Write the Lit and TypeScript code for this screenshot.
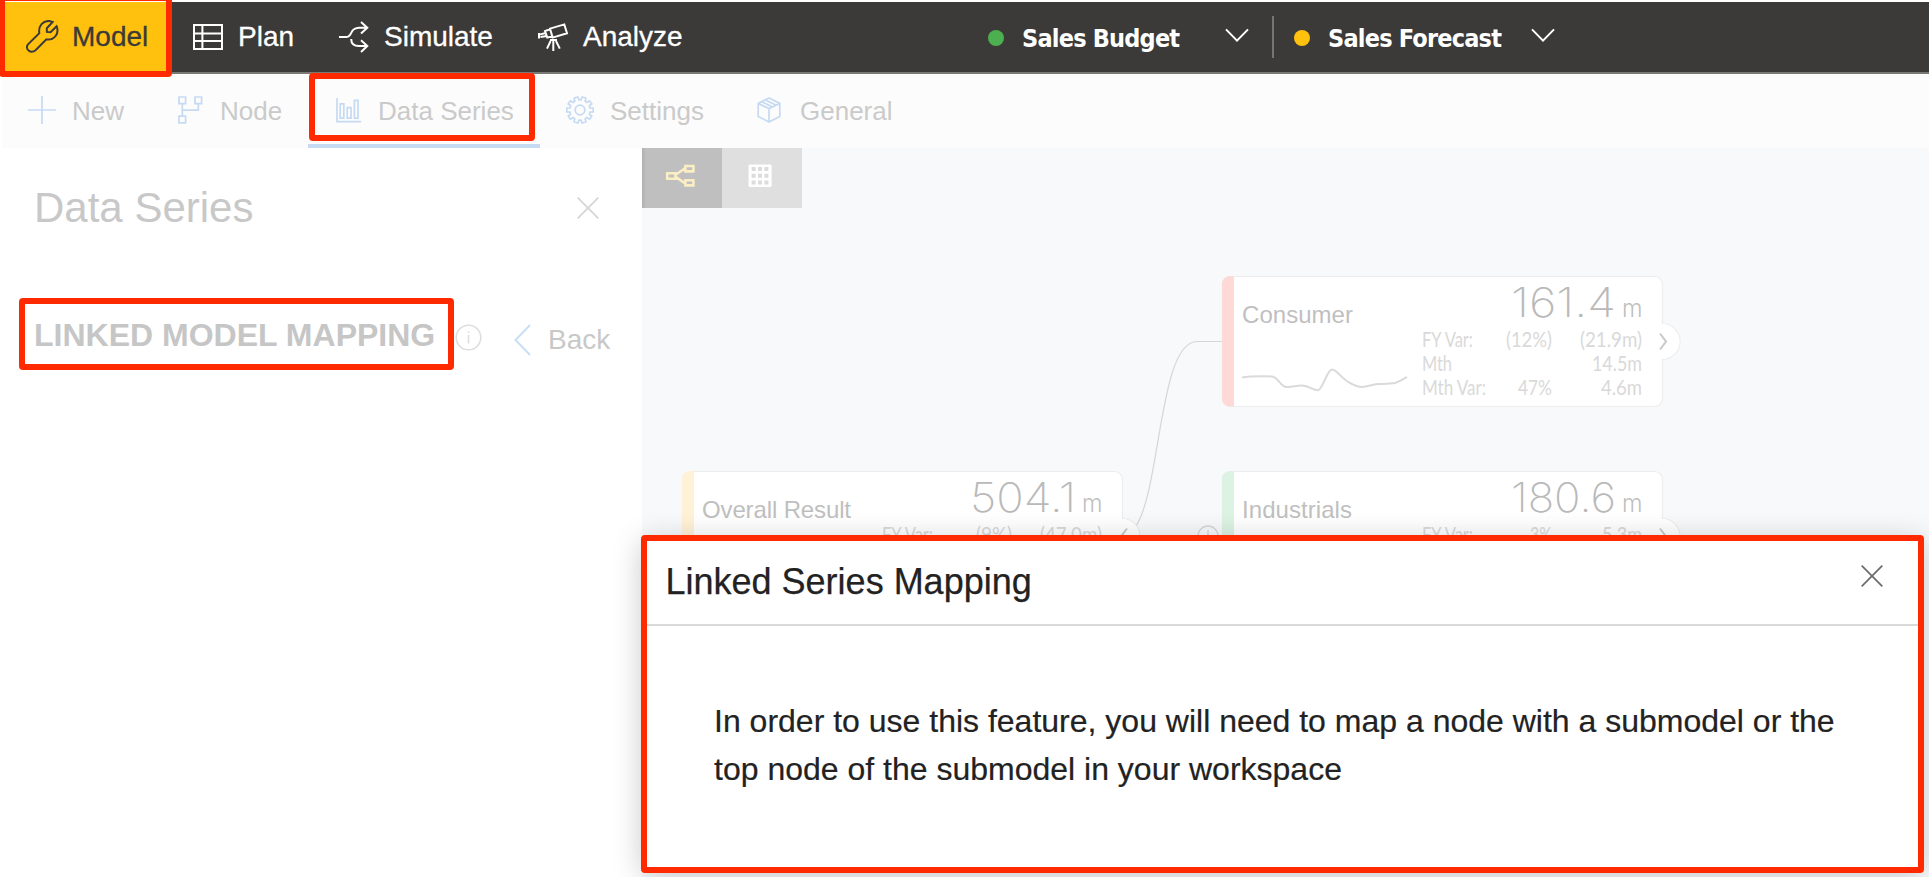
import { LitElement, html, svg, css } from "lit";
import { customElement } from "lit/decorators.js";

function gearPath(cx: number, cy: number, teeth: number, outer: number, inner: number): string {
  const step = (Math.PI * 2) / teeth;
  const pt = (r: number, a: number) => `${(cx + r * Math.cos(a)).toFixed(2)} ${(cy + r * Math.sin(a)).toFixed(2)}`;
  let d = "";
  for (let i = 0; i < teeth; i++) {
    const a = i * step;
    d += `${i ? "L" : "M"}${pt(inner, a - step * 0.34)}L${pt(outer, a - step * 0.24)}`;
    d += `A${outer} ${outer} 0 0 1 ${pt(outer, a + step * 0.24)}L${pt(inner, a + step * 0.34)}`;
  }
  return d + "Z";
}

const icons = {
  wrench: html`<svg width="34" height="34" viewBox="0 0 34 34">
    <path d="M13.3 13.2C12.2 5.5 17 .6 23.4 1L26.6 2L20.8 8.2L20.9 11.9L24.6 12.3L30.6 6.2C33.4 13 29 20.4 20.4 19.4L9.8 30C4.6 34.6 -1.6 28.8 2 24.4Z" />
  </svg>`,
  table: html`<svg width="30" height="26" viewBox="0 0 30 26">
    <path d="M1 1H29V25H1ZM1 9.5H29M1 17H29M9.4 1V25" />
  </svg>`,
  split: html`<svg width="30" height="32" viewBox="0 0 30 32">
    <path d="M0 16H7C14 16 10 7 20 6.8H28M22 1L28.3 6.8L22 12.6M12.2 18C12.2 23 15 25 20 25H28M22 19.2L28.3 25L22 31" />
  </svg>`,
  telescope: html`<svg width="31" height="28" viewBox="0 0 31 28">
    <path d="M12 5.6L26.3 1.4L29 10.3L14.6 14.6ZM12 6.2L7 8L9.3 14.6L14.4 13.2M7.6 10L1.5 11.6M8.6 13L2.5 14M1 10V15.6M15.3 16V28M12.6 18L9 25.6M18 18L21.8 25.6M12 17H19" />
  </svg>`,
  plus: html`<svg width="28" height="28" viewBox="0 0 28 28"><path d="M14 0V28M0 14H28" /></svg>`,
  node: html`<svg width="25" height="28" viewBox="0 0 25 28">
    <path d="M1 1H7.6V7.6H1ZM17 1H23.6V7.6H17ZM1 20.2H7.6V26.8H1ZM4.3 7.6V20.2M4.3 14.2H20.3V7.6" />
  </svg>`,
  chart: html`<svg width="25" height="25" viewBox="0 0 25 25">
    <path d="M1 0V23.6H25M4.2 5.8H7.8V20.2H4.2ZM11.2 9.6H15V20.2H11.2ZM18.4 2.4H22V20.2H18.4Z" />
  </svg>`,
  gear: html`<svg width="28" height="28" viewBox="0 0 28 28">
    <path d=${gearPath(14, 14, 10, 13.2, 10.2)} /><circle cx="14" cy="14" r="4.8" />
  </svg>`,
  cube: html`<svg width="24" height="26" viewBox="0 0 24 26">
    <path d="M12 1L22.8 6.4V19.4L12 25L1.2 19.4V6.4ZM1.2 6.4L12 11.6L22.8 6.4M12 11.6V25M4.8 4.8L15.6 10M8.4 3L19.2 8.2" />
  </svg>`,
  chevron: html`<svg width="24" height="14" viewBox="0 0 24 14"><path d="M1 1.4L12 12.6L23 1.4" /></svg>`,
  cross: html`<svg width="22" height="22" viewBox="0 0 22 22"><path d="M.7 .7L21.3 21.3M21.3 .7L.7 21.3" /></svg>`,
};

interface Metric {
  label: string;
  labelWidth: number;
  pct: string;
  pctWidth: number;
  value: string;
  valueWidth: number;
}

interface NodeCard {
  x: number;
  y: number;
  name: string;
  nameWidth: number;
  total: string;
  totalWidth: number;
  tone: string;
  open: boolean;
  metrics: Metric[];
}

const NODES: NodeCard[] = [
  {
    x: 1222, y: 276, name: "Consumer", nameWidth: 111, total: "161.4", totalWidth: 105, tone: "red", open: false,
    metrics: [
      { label: "FY Var:", labelWidth: 51, pct: "(12%)", pctWidth: 46, value: "(21.9m)", valueWidth: 62 },
      { label: "Mth", labelWidth: 30, pct: "", pctWidth: 0, value: "14.5m", valueWidth: 50 },
      { label: "Mth Var:", labelWidth: 64, pct: "47%", pctWidth: 34, value: "4.6m", valueWidth: 41 },
    ],
  },
  {
    x: 682, y: 471, name: "Overall Result", nameWidth: 149, total: "504.1", totalWidth: 106, tone: "amber", open: true,
    metrics: [{ label: "FY Var:", labelWidth: 51, pct: "(9%)", pctWidth: 36, value: "(47.0m)", valueWidth: 62 }],
  },
  {
    x: 1222, y: 471, name: "Industrials", nameWidth: 110, total: "180.6", totalWidth: 105, tone: "green", open: false,
    metrics: [{ label: "FY Var:", labelWidth: 51, pct: "3%", pctWidth: 22, value: "5.3m", valueWidth: 40 }],
  },
];

@customElement("model-canvas")
export class ModelCanvas extends LitElement {
  static styles = css`
    :host { display: block; flex: 1; position: relative; background: #f8f9fb; min-width: 0; overflow: hidden; }
    .diagram { display: block; position: absolute; left: 0; top: 0; font-family: "Liberation Sans", Arial, sans-serif; }
    .views { position: relative; display: flex; width: 160px; height: 60px; }
    .view { width: 80px; height: 60px; background: #dfdfdf; }
    .active { background: linear-gradient(90deg, #b0b0b0, #bfbfbf 4px); }
    .view svg { display: block; }
    .card { fill: #fff; stroke: #ededed; stroke-width: 1.2; }
    .red { fill: #ffd9d6; }
    .amber { fill: #fff2d6; }
    .green { fill: #dcf2e2; }
    .name { font-size: 24px; fill: #bfbfbf; }
    .total { font-family: Inter, "Liberation Sans", sans-serif; font-weight: 200; font-size: 41px; fill: #b9b9b9; }
    .unit { font-family: Inter, "Liberation Sans", sans-serif; font-weight: 300; font-size: 24px; fill: #bfbfbf; }
    .metric { font-family: Lato, "Open Sans", sans-serif; font-size: 21.5px; fill: #d9d9d9; }
    .wire { fill: none; stroke: #d5d6d7; stroke-width: 1.2; }
    .spark { fill: none; stroke: #dadada; stroke-width: 2; }
    .arrow { fill: none; stroke: #c8c8c8; stroke-width: 2; }
    .info { fill: none; stroke: #d5d6d7; stroke-width: 1.3; }
  `;

  private card(n: NodeCard) {
    const { x, y } = n;
    const right = x + 440;
    const tip = n.open ? `M${right + 5} ${y + 57.5}L${right - 1} ${y + 65.5}L${right + 5} ${y + 73.5}` : `M${right - 2} ${y + 57.5}L${right + 4} ${y + 65.5}L${right - 2} ${y + 73.5}`;
    return svg`
      <circle class="card" cx=${right} cy=${y + 65.5} r="18"></circle>
      <rect class="card" x=${x + 0.5} y=${y + 0.5} width="440" height="130" rx="8"></rect>
      <circle cx=${right} cy=${y + 65.5} r="17.4" fill="#fff"></circle>
      <path class=${n.tone} d=${`M${x + 12} ${y}H${x + 8}A8 8 0 0 0 ${x} ${y + 8}V${y + 122.5}A8 8 0 0 0 ${x + 8} ${y + 130.5}H${x + 12}Z`}></path>
      <path class="arrow" d=${tip}></path>
      <text class="name" x=${x + 20} y=${y + 46.8} textLength=${n.nameWidth}>${n.name}</text>
      <text class="total" x=${x + 394} y=${y + 41} text-anchor="end" textLength=${n.totalWidth} lengthAdjust="spacingAndGlyphs">${n.total}</text>
      <text class="unit" x=${x + 420.5} y=${y + 41} text-anchor="end" textLength="20.5" lengthAdjust="spacingAndGlyphs">m</text>
      ${n.metrics.map((m, i) => {
        const by = y + 71 + i * 24;
        return svg`
          <text class="metric" x=${x + 200} y=${by} textLength=${m.labelWidth} lengthAdjust="spacingAndGlyphs">${m.label}</text>
          ${m.pct ? svg`<text class="metric" x=${x + 330} y=${by} text-anchor="end" textLength=${m.pctWidth} lengthAdjust="spacingAndGlyphs">${m.pct}</text>` : ""}
          <text class="metric" x=${x + 420} y=${by} text-anchor="end" textLength=${m.valueWidth} lengthAdjust="spacingAndGlyphs">${m.value}</text>`;
      })}`;
  }

  render() {
    return html`
      <svg class="diagram" width="1287" height="729" viewBox="642 148 1287 729">
        <path class="wire" d="M1136 526C1161 488 1159 341.5 1197 341.5H1222" />
        ${NODES.map((n) => this.card(n))}
        <path class="spark" d="M1242 377.5C1248 376.4 1262 376.2 1272 376.4C1278 377 1280 386 1286 387C1292 387.6 1296 385.4 1302 385.6C1309 386 1314 390.6 1318 390.2C1323 389 1327 369.6 1332 369.4C1337 369.6 1341 378 1349 382.4C1355 386 1358 387 1362 387C1368 386.6 1372 384.4 1378 384C1385 383.8 1390 384 1395 383C1400 381.6 1403 379 1407 377" />
        <circle class="info" cx="1208" cy="536" r="10" />
        <path class="info" d="M1208 530V541" />
      </svg>
      <div class="views">
        <div class="view active">
          <svg width="80" height="60" viewBox="0 0 80 60" fill="none" stroke="#fbedc4" stroke-width="2.6">
            <path d="M25.2 25.3H33.4V30.7H25.2ZM43.4 18H51.4V23.4H43.4ZM43.4 32.2H51.4V37.4H43.4ZM33.4 27L43.4 20M33.4 28.6L43.4 35.6" />
          </svg>
        </div>
        <div class="view">
          <svg width="80" height="60" viewBox="0 0 80 60">
            <rect x="26.6" y="16.4" width="23" height="22.6" rx="1" fill="#fff" />
            <path fill="#dcdcdc" d="M29.6 19h4v4h-4zM36 19h4v4h-4zM42.4 19h4v4h-4zM29.6 25.8h4v4h-4zM36 25.8h4v4h-4zM42.4 25.8h4v4h-4zM29.6 32.4h4v4h-4zM36 32.4h4v4h-4zM42.4 32.4h4v4h-4z" />
          </svg>
        </div>
      </div>
    `;
  }
}

@customElement("app-root")
export class AppRoot extends LitElement {
  static styles = css`
    :host {
      display: flex; flex-direction: column; position: relative; box-sizing: border-box;
      width: 1929px; height: 877px; padding-top: 2px; overflow: hidden; background: #fff;
      font-family: "Liberation Sans", Arial, Helvetica, sans-serif; color: #222;
    }
    svg { display: block; fill: none; stroke: currentColor; flex: none; }
    .top { display: flex; height: 70px; border-bottom: 2px solid #7a7976; background: #3b3a38; color: #fff; flex: none; }
    .item { display: flex; align-items: center; box-sizing: border-box; height: 70px; padding-bottom: 1px; font-size: 28px; white-space: nowrap; -webkit-text-stroke: 0.3px; }
    .item svg { stroke-width: 2; }
    .model { width: 169px; padding-left: 26px; gap: 12px; background: #ffc10e; color: #3b3a38; }
    .plan { width: 170px; padding-left: 24px; gap: 15px; }
    .simulate { width: 199px; gap: 15px; }
    .analyze { width: 450px; gap: 14px; }
    .scenario { display: flex; align-items: center; height: 70px; padding-top: 3px; box-sizing: border-box; font: bold 25px "DejaVu Sans Condensed", "DejaVu Sans", sans-serif; font-stretch: semi-condensed; letter-spacing: -0.8px; white-space: nowrap; }
    .scenario svg { stroke-width: 2; margin-bottom: 7px; }
    .dot { width: 16px; height: 16px; border-radius: 50%; margin: 0 18px 1px 0; flex: none; }
    .green { background: #4caf50; }
    .yellow { background: #ffc10e; }
    .label { width: 203px; }
    .sep { width: 2px; height: 42px; margin: 14px 20px 0 23px; background: #767573; }
    .sub { display: flex; height: 74px; margin-left: 2px; background: #fcfcfc; flex: none; }
    .tab { display: flex; align-items: center; box-sizing: border-box; height: 74px; color: #cacaca; font-size: 26px; white-space: nowrap; }
    .tab svg { color: #c6daf2; stroke-width: 1.7; margin-bottom: 2px; }
    .new { width: 149px; padding-left: 26px; gap: 16px; }
    .node { width: 157px; padding-left: 27px; gap: 17px; }
    .series { width: 232px; padding: 4px 0 0 28px; gap: 17px; border-bottom: 4px solid #c6daf2; }
    .settings { width: 190px; padding-left: 26px; gap: 16px; }
    .general { padding-left: 27px; gap: 19px; }
    .body { display: flex; flex: 1; min-height: 0; }
    .panel { width: 642px; background: #fff; flex: none; color: #c8c8c8; }
    .heading { display: flex; align-items: center; justify-content: space-between; padding: 36px 43px 0 34px; font-size: 42px; line-height: 48px; }
    .heading svg { color: #d6d6d6; stroke-width: 1.8; margin-bottom: 1px; }
    .row { display: flex; align-items: center; padding: 78px 0 0 34px; line-height: 40px; }
    .linked { width: 422px; font-size: 32px; font-weight: bold; white-space: nowrap; color: #c6c6c6; }
    .hint { color: #dedede; stroke-width: 1.6; margin: 4px 32px 0 -1px; }
    .back { color: #c9def8; stroke-width: 2; margin: 10px 17px 0 0; }
    .backtext { font-size: 28px; margin-top: 10px; }
    .dialog {
      position: absolute; left: 644px; top: 537px; width: 1277px; height: 330px; background: #fff;
      box-shadow: 0 6px 28px 2px rgba(0, 0, 0, 0.22);
    }
    .dialoghead { display: flex; justify-content: space-between; box-sizing: border-box; height: 89px; padding: 24px 38px 0 21.5px; border-bottom: 2px solid #d9d9d9; font-size: 36px; line-height: 41px; -webkit-text-stroke: 0.25px; }
    .dialoghead svg { color: #6e6e6e; stroke-width: 1.8; margin-top: 4px; }
    .message { padding: 71px 60px 0 70px; font-size: 32px; line-height: 48px; -webkit-text-stroke: 0.2px; }
    .mark { position: absolute; box-sizing: border-box; border: 6px solid #ff2a00; border-radius: 4px; pointer-events: none; }
    .m1 { left: -1px; top: -5px; width: 173px; height: 82px; }
    .m2 { left: 309px; top: 73px; width: 226px; height: 68px; }
    .m3 { left: 19px; top: 298px; width: 435px; height: 72px; }
    .m4 { left: 641px; top: 535px; width: 1283px; height: 338px; }
  `;

  render() {
    return html`
      <header class="top">
        <div class="item model">${icons.wrench}<span>Model</span></div>
        <div class="item plan">${icons.table}<span>Plan</span></div>
        <div class="item simulate">${icons.split}<span>Simulate</span></div>
        <div class="item analyze">${icons.telescope}<span>Analyze</span></div>
        <div class="scenario"><i class="dot green"></i><span class="label">Sales Budget</span>${icons.chevron}</div>
        <div class="sep"></div>
        <div class="scenario"><i class="dot yellow"></i><span class="label">Sales Forecast</span>${icons.chevron}</div>
      </header>
      <nav class="sub">
        <div class="tab new">${icons.plus}<span>New</span></div>
        <div class="tab node">${icons.node}<span>Node</span></div>
        <div class="tab series">${icons.chart}<span>Data Series</span></div>
        <div class="tab settings">${icons.gear}<span>Settings</span></div>
        <div class="tab general">${icons.cube}<span>General</span></div>
      </nav>
      <div class="body">
        <aside class="panel">
          <div class="heading"><span>Data Series</span>${icons.cross}</div>
          <div class="row">
            <span class="linked">LINKED MODEL MAPPING</span>
            <svg class="hint" width="27" height="27" viewBox="0 0 27 27">
              <circle cx="13.5" cy="13.5" r="12.3" /><path d="M13.5 11V19.5M13.5 7.2V9" />
            </svg>
            <svg class="back" width="17" height="32" viewBox="0 0 17 32"><path d="M16 1L1.5 16L16 31" /></svg>
            <span class="backtext">Back</span>
          </div>
        </aside>
        <model-canvas></model-canvas>
      </div>
      <section class="dialog">
        <div class="dialoghead"><span>Linked Series Mapping</span>${icons.cross}</div>
        <div class="message">In order to use this feature, you will need to map a node with a submodel or the top node of the submodel in your workspace</div>
      </section>
      <div class="mark m1"></div>
      <div class="mark m2"></div>
      <div class="mark m3"></div>
      <div class="mark m4"></div>
    `;
  }
}
